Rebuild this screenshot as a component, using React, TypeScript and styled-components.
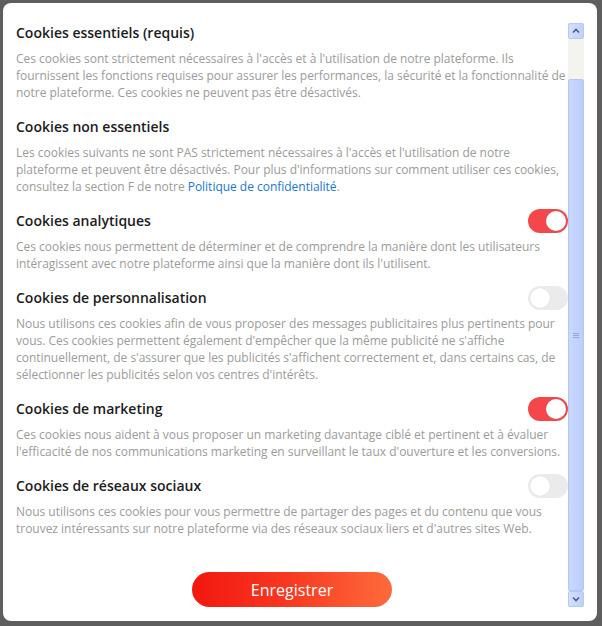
import React from "react";
import styled, { createGlobalStyle } from "styled-components";

const Global = createGlobalStyle`
  html, body { margin: 0; padding: 0; }
  body {
    background: #5e5e5e;
    font-family: "Open Sans", "Liberation Sans", sans-serif;
    -webkit-font-smoothing: antialiased;
  }
`;

const Modal = styled.div`
  margin: 3px;
  width: 594px;
  height: 618px;
  box-sizing: border-box;
  background: #ffffff;
  border-radius: 8px;
  padding: 20px 13px 0 13px;
  display: flex;
  flex-direction: column;
`;

const Body = styled.div`
  display: flex;
  height: 584px;
`;

const Content = styled.div`
  flex: 1;
  display: flex;
  flex-direction: column;
  padding-top: 1px;
`;

const Section = styled.section`
  margin-bottom: 17px;
`;

const Header = styled.div`
  display: flex;
  align-items: center;
  justify-content: space-between;
  height: 18px;
  margin-bottom: 8px;
`;

const Title = styled.h3`
  margin: 0;
  font-size: 14px;
  line-height: 18px;
  font-weight: 600;
  color: #1c1c1c;
`;

const Desc = styled.p`
  margin: 0;
  font-size: 12px;
  line-height: 17px;
  letter-spacing: -0.02px;
  color: #9b9b9b;
`;

const Link = styled.a`
  color: #1877d2;
  text-decoration: none;
`;

const Toggle = styled.span<{ $on: boolean }>`
  flex-shrink: 0;
  width: 40px;
  height: 24px;
  box-sizing: border-box;
  border-radius: 12px;
  background: ${(p) => (p.$on ? "#f4474b" : "#ebebeb")};
  display: flex;
  align-items: center;
  justify-content: ${(p) => (p.$on ? "flex-end" : "flex-start")};
  padding: 2px;
`;

const Knob = styled.span`
  width: 20px;
  height: 20px;
  border-radius: 50%;
  background: #ffffff;
  box-shadow: 0 0 1px rgba(0, 0, 0, 0.15);
`;

const SaveButton = styled.button`
  align-self: center;
  margin-top: 18px;
  width: 200px;
  height: 36px;
  border: none;
  border-radius: 18px;
  background: linear-gradient(90deg, #f3170f 0%, #f83a22 50%, #fd6b3b 100%);
  color: #ffffff;
  font-family: "Open Sans", "Liberation Sans", sans-serif;
  font-size: 16px;
  font-weight: 400;
  cursor: pointer;
`;

const Scrollbar = styled.div`
  width: 16px;
  display: flex;
  flex-direction: column;
  background: #f4f3ee;
`;

const ScrollButton = styled.div`
  width: 16px;
  height: 16px;
  box-sizing: border-box;
  border: 1px solid #b7c8f2;
  border-radius: 2px;
  background: linear-gradient(90deg, #d3e0fd, #bfd0fa);
  display: flex;
  align-items: center;
  justify-content: center;
`;

const TrackGap = styled.div`
  height: 40px;
`;

const Thumb = styled.div`
  flex: 1;
  box-sizing: border-box;
  border: 1px solid #b4c6f4;
  border-radius: 2px;
  background: linear-gradient(90deg, #c9d8fd, #bccdf9);
  display: flex;
  flex-direction: column;
  align-items: center;
  justify-content: center;
  gap: 1px;
`;

const Grip = styled.span`
  width: 6px;
  height: 1px;
  background: #8fa6db;
`;

type Item = {
  title: string;
  toggle?: boolean;
  desc: React.ReactNode;
};

const items: Item[] = [
  {
    title: "Cookies essentiels (requis)",
    desc:
      "Ces cookies sont strictement nécessaires à l'accès et à l'utilisation de notre plateforme. Ils fournissent les fonctions requises pour assurer les performances, la sécurité et la fonctionnalité de notre plateforme. Ces cookies ne peuvent pas être désactivés.",
  },
  {
    title: "Cookies non essentiels",
    desc: (
      <>
        Les cookies suivants ne sont PAS strictement nécessaires à l'accès et l'utilisation de notre
        plateforme et peuvent être désactivés. Pour plus d'informations sur comment utiliser ces cookies,
        consultez la section F de notre <Link href="#">Politique de confidentialité</Link>.
      </>
    ),
  },
  {
    title: "Cookies analytiques",
    toggle: true,
    desc:
      "Ces cookies nous permettent de déterminer et de comprendre la manière dont les utilisateurs intéragissent avec notre plateforme ainsi que la manière dont ils l'utilisent.",
  },
  {
    title: "Cookies de personnalisation",
    toggle: false,
    desc:
      "Nous utilisons ces cookies afin de vous proposer des messages publicitaires plus pertinents pour vous. Ces cookies permettent également d'empêcher que la même publicité ne s'affiche continuellement, de s'assurer que les publicités s'affichent correctement et, dans certains cas, de sélectionner les publicités selon vos centres d'intérêts.",
  },
  {
    title: "Cookies de marketing",
    toggle: true,
    desc:
      "Ces cookies nous aident à vous proposer un marketing davantage ciblé et pertinent et à évaluer l'efficacité de nos communications marketing en surveillant le taux d'ouverture et les conversions.",
  },
  {
    title: "Cookies de réseaux sociaux",
    toggle: false,
    desc:
      "Nous utilisons ces cookies pour vous permettre de partager des pages et du contenu que vous trouvez intéressants sur notre plateforme via des réseaux sociaux liers et d'autres sites Web.",
  },
];

const Chevron = ({ up }: { up: boolean }) => (
  <svg width="8" height="6" viewBox="0 0 8 6">
    <path
      d={up ? "M1 4.5 L4 1.5 L7 4.5" : "M1 1.5 L4 4.5 L7 1.5"}
      fill="none"
      stroke="#4a5d86"
      strokeWidth="1.6"
    />
  </svg>
);

export default function App() {
  return (
    <>
      <Global />
      <Modal>
        <Body>
          <Content>
            {items.map((it) => (
              <Section key={it.title}>
                <Header>
                  <Title>{it.title}</Title>
                  {it.toggle !== undefined && (
                    <Toggle $on={it.toggle}>
                      <Knob />
                    </Toggle>
                  )}
                </Header>
                <Desc>{it.desc}</Desc>
              </Section>
            ))}
            <SaveButton>Enregistrer</SaveButton>
          </Content>
          <Scrollbar>
            <ScrollButton>
              <Chevron up />
            </ScrollButton>
            <TrackGap />
            <Thumb>
              <Grip />
              <Grip />
              <Grip />
            </Thumb>
            <ScrollButton>
              <Chevron up={false} />
            </ScrollButton>
          </Scrollbar>
        </Body>
      </Modal>
    </>
  );
}
